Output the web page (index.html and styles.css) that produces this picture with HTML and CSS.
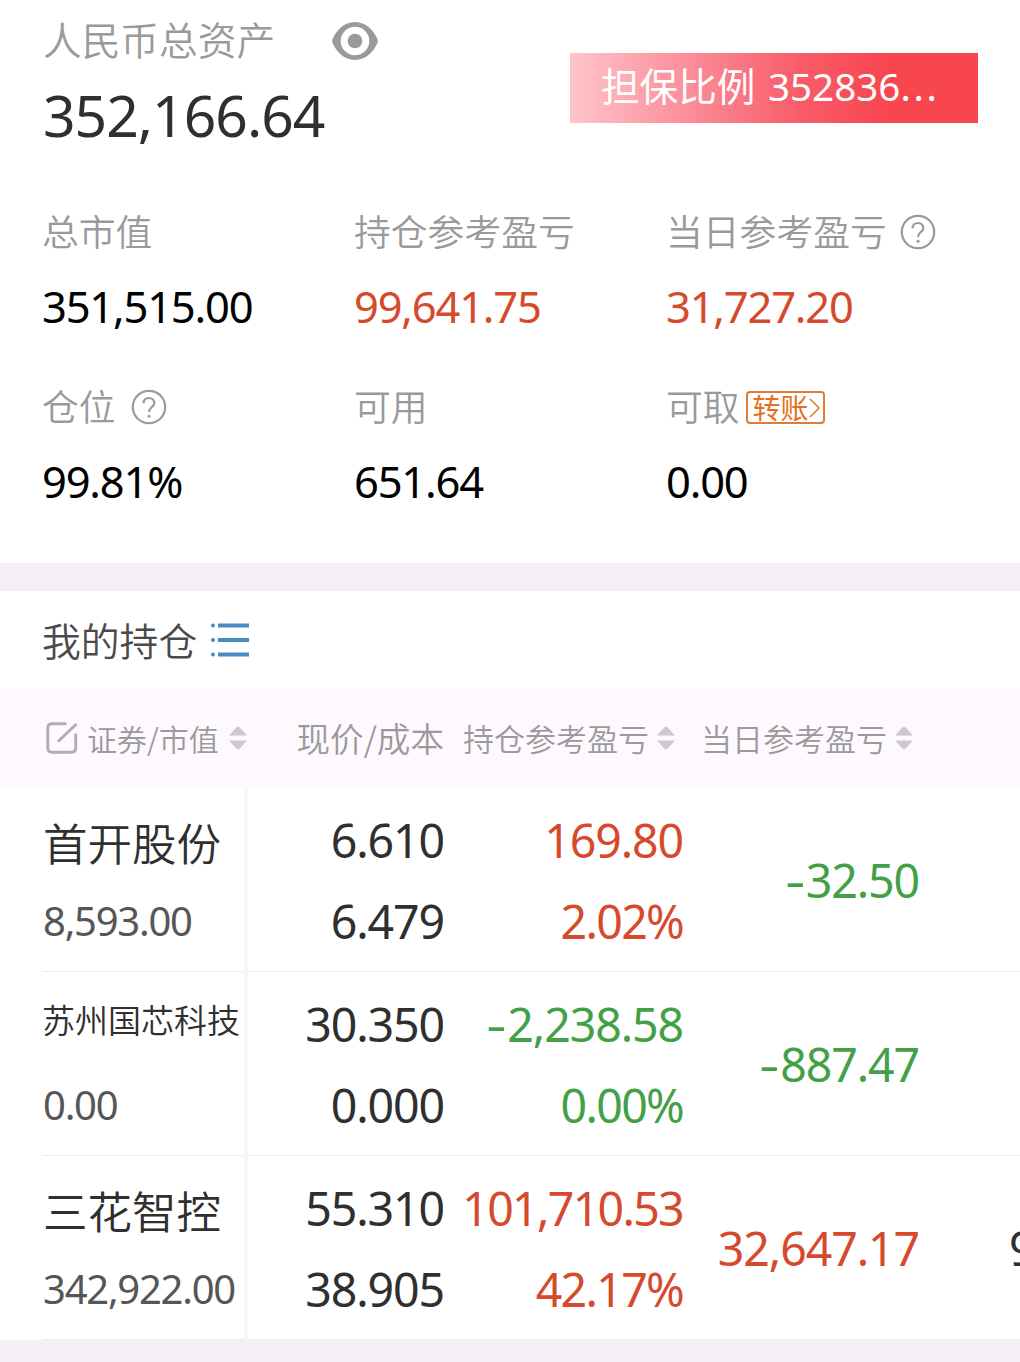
FILE: index.html
```
<!DOCTYPE html>
<html lang="zh-CN">
<head>
<meta charset="utf-8">
<title>我的持仓</title>
<link rel="stylesheet" href="styles.css">
</head>
<body>
<svg width="0" height="0" class="defs">
  <symbol id="help" viewBox="0 0 36 36"><circle cx="18" cy="18" r="16.2" fill="none" stroke="currentColor" stroke-width="2.2"/><path d="M12.6 14.2c0-3.200 2.300-5.200 5.300-5.200s5.400 2 5.400 4.900c0 2.200-1.300 3.300-2.900 4.600-1.600 1.300-2.400 2.200-2.400 4.500" fill="none" stroke="currentColor" stroke-width="2.200"/><circle cx="18" cy="27.300" r="1.500" fill="currentColor"/></symbol>
  <symbol id="sort" viewBox="0 0 18 24"><path d="M0 9.500 7.500 1.300Q9 0 10.500 1.300L18 9.500ZM0 14.500H18L10.500 22.700Q9 24 7.500 22.700Z" fill="#cacaca"/></symbol>
</svg>

<header class="summary">
  <div class="total">
    <div class="total-label">人民币总资产
      <svg class="eye" viewBox="0 0 46 38"><path fill-rule="evenodd" d="M23 0C34 0 41.500 8.500 45.200 16.500Q46.300 19 45.200 21.500C41.500 29.500 34 38 23 38S4.500 29.500.8 21.500Q-.3 19 .8 16.500C4.500 8.500 12 0 23 0ZM23 4.700a14.300 14.300 0 1 0 0 28.600a14.300 14.300 0 1 0 0-28.600Z" fill="#9b999b"/><circle cx="23" cy="19" r="7.300" fill="#9b999b"/></svg>
    </div>
    <div class="total-value">352,166.64</div>
  </div>
  <div class="ratio">担保比例 <span class="ratio-num">352836<span class="dots">...</span></span></div>
</header>

<section class="stats">
  <div class="stat"><div class="label">总市值</div><div class="value">351,515.00</div></div>
  <div class="stat"><div class="label">持仓参考盈亏</div><div class="value up">99,641.75</div></div>
  <div class="stat"><div class="label">当日参考盈亏<svg class="help"><use href="#help"/></svg></div><div class="value up">31,727.20</div></div>
  <div class="stat"><div class="label">仓位<svg class="help wide"><use href="#help"/></svg></div><div class="value">99.81%</div></div>
  <div class="stat"><div class="label">可用</div><div class="value">651.64</div></div>
  <div class="stat"><div class="label">可取<span class="transfer">转账<svg width="11" height="20" viewBox="0 0 11 20"><path d="M1 1 10 10 1 19" fill="none" stroke="#e5813a" stroke-width="1.700"/></svg></span></div><div class="value">0.00</div></div>
</section>

<div class="band"></div>

<h2 class="title">我的持仓
  <svg class="list" viewBox="0 0 38 34" fill="#4a8ac6"><circle cx="2" cy="2.500" r="2"/><circle cx="2" cy="17" r="2"/><circle cx="2" cy="31.500" r="2"/><path d="M7 .5H38V4.500H7ZM7 15H38V19H7ZM7 29.500H38V33.500H7Z"/></svg>
</h2>

<div class="thead">
  <div class="th first"><svg class="edit" viewBox="0 0 32 32" fill="none" stroke="#b0aeb0" stroke-width="3"><path d="M20.500 1.800H6Q1.800 1.800 1.800 6V26Q1.800 30.200 6 30.200H25.500Q29.700 30.200 29.700 26V11.500M12 19.500 30.500 2"/></svg>证券/市值<svg class="sort"><use href="#sort"/></svg></div>
  <div class="th price">现价/成本</div>
  <div class="th hold">持仓参考盈亏<svg class="sort"><use href="#sort"/></svg></div>
  <div class="th today">当日参考盈亏<svg class="sort"><use href="#sort"/></svg></div>
</div>

<main>
  <div class="row">
    <div class="cell name"><div class="stock">首开股份</div><div class="amount">8,593.00</div></div>
    <div class="cell pair"><div>6.610</div><div>6.479</div></div>
    <div class="cell pair up"><div>169.80</div><div class="tight">2.02%</div></div>
    <div class="cell day down"><div><span class="neg">-</span>32.50</div></div>
    <div class="cell more"></div>
  </div>
  <div class="row">
    <div class="cell name"><div class="stock small">苏州国芯科技</div><div class="amount">0.00</div></div>
    <div class="cell pair"><div>30.350</div><div>0.000</div></div>
    <div class="cell pair down"><div><span class="neg">-</span>2,238.58</div><div class="tight">0.00%</div></div>
    <div class="cell day down"><div><span class="neg">-</span>887.47</div></div>
    <div class="cell more"></div>
  </div>
  <div class="row">
    <div class="cell name"><div class="stock">三花智控</div><div class="amount">342,922.00</div></div>
    <div class="cell pair"><div>55.310</div><div>38.905</div></div>
    <div class="cell pair up"><div class="tight">101,710.53</div><div class="tight">42.17%</div></div>
    <div class="cell day up"><div>32,647.17</div></div>
    <div class="cell more">9</div>
  </div>
</main>
<div class="footer"></div>
</body>
</html>
```
FILE: styles.css
```
* { box-sizing: border-box; }
body {
  margin: 0;
  width: 1020px;
  height: 1362px;
  overflow: hidden;
  display: flex;
  flex-direction: column;
  background: #fff;
  color: #2f2f2f;
  font-family: "Noto Sans", "Noto Sans CJK SC", sans-serif;
  font-weight: 400;
}
svg { flex: none; display: block; }
.defs { display: none; }

.summary {
  height: 196px;
  padding: 0 42px 0 43px;
  display: flex;
  justify-content: space-between;
}
.total-label {
  height: 80px;
  display: flex;
  align-items: center;
  gap: 57px;
  font: 350 38.700px/76px "Noto Sans CJK SC", sans-serif;
  padding-bottom: 4px;
  color: #9b999b;
}
.eye { width: 46px; height: 38px; margin-top: 6px; }
.total-value {
  font-size: 57px;
  line-height: 70px;
  letter-spacing: -1px;
}
.ratio {
  width: 408px;
  height: 70px;
  margin-top: 53px;
  padding-left: 31px;
  background: linear-gradient(90deg, #ffc4cb 0%, #fb8f9b 28%, #f85c69 56%, #f8464f 78%, #f8464f 100%);
  color: #fff;
  font: 400 38.600px/63px "Noto Sans CJK SC", sans-serif;
  white-space: pre;
}
.ratio-num { margin-left: 4px; font-family: "Noto Sans", sans-serif; }
.dots { letter-spacing: 2.700px; }

.stats {
  height: 367px;
  padding-left: 42px;
  display: grid;
  grid-template-columns: 312px 312px 1fr;
  grid-template-rows: 175px 175px;
}
.label {
  height: 72px;
  display: flex;
  align-items: center;
  padding-bottom: 4px;
  font: 350 36.800px/68px "Noto Sans CJK SC", sans-serif;
  color: #9b999b;
}
.help { width: 36px; height: 36px; margin-left: 13px; margin-top: 4px; }
.help.wide { margin-left: 15px; }
.value {
  height: 78px;
  font-size: 43.500px;
  line-height: 76px;
  letter-spacing: -1.200px;
  color: #000;
}
.up, .value.up { color: #d54a2c; }
.down { color: #43a047; }
.transfer {
  width: 79px;
  height: 33px;
  margin-top: 4px;
  margin-left: 6px;
  padding-left: 5px;
  border: 2px solid #df7d36;
  border-radius: 4px;
  display: flex;
  align-items: center;
  font-size: 28px;
  line-height: 25px;
  font-weight: 400;
  color: #e56f20;
}
.transfer svg { margin-top: 1px; }

.band { height: 28px; background: #f4eef6; }
.title {
  height: 97px;
  margin: 0;
  padding-left: 42px;
  display: flex;
  align-items: center;
  gap: 14px;
  font: 350 38.800px/95px "Noto Sans CJK SC", sans-serif;
  color: #4a4a4a;
}
.list { width: 38px; height: 34px; }

.thead {
  height: 100px;
  background: #fdf9fe;
  display: grid;
  grid-template-columns: 248px 196px 239px 1fr;
  font: 350 31px/98px "Noto Sans CJK SC", sans-serif;
  color: #9b999b;
}
.th { display: flex; align-items: center; height: 100px; white-space: nowrap; }
.th.first { padding-left: 46px; font-size: 30px; }
.edit { width: 32px; height: 32px; margin-right: 9px; }
.sort { width: 18px; height: 24px; margin-left: 10px; }
.th.price { justify-content: flex-end; font-size: 33.600px; }
.th.hold { padding-left: 19px; }
.th.hold .sort, .th.today .sort { margin-left: 8px; }
.th.today { padding-left: 18px; }

.row {
  height: 184px;
  display: grid;
  grid-template-columns: 248px 196px 239px 236px 101px;
  background: linear-gradient(#ececec, #ececec) 42px 183px / 978px 1px no-repeat;
  font-size: 46.500px;
  letter-spacing: -1.100px;
}
.tight { letter-spacing: -1.700px; }
.cell { text-align: right; white-space: nowrap; }
.name {
  padding-left: 43px;
  text-align: left;
  border-right: 4px solid #f7f6f8;
}
.stock { font: 350 44.500px/107px "Noto Sans CJK SC", sans-serif; height: 92px; letter-spacing: 0; }
.stock.small { font-size: 33px; line-height: 94px; margin-left: -1px; }
.amount { font-size: 40px; line-height: 82px; letter-spacing: -1.250px; color: #565656; }
.pair { padding-top: 12px; line-height: 81px; }
.day { line-height: 184px; }
.more { overflow: hidden; padding-left: 90px; text-align: left; line-height: 184px; }
.neg { display: inline-block; margin-right: 2px; transform: scaleX(1.350); transform-origin: right; }
.footer { flex: 1; background: #f4eef6; }
```
